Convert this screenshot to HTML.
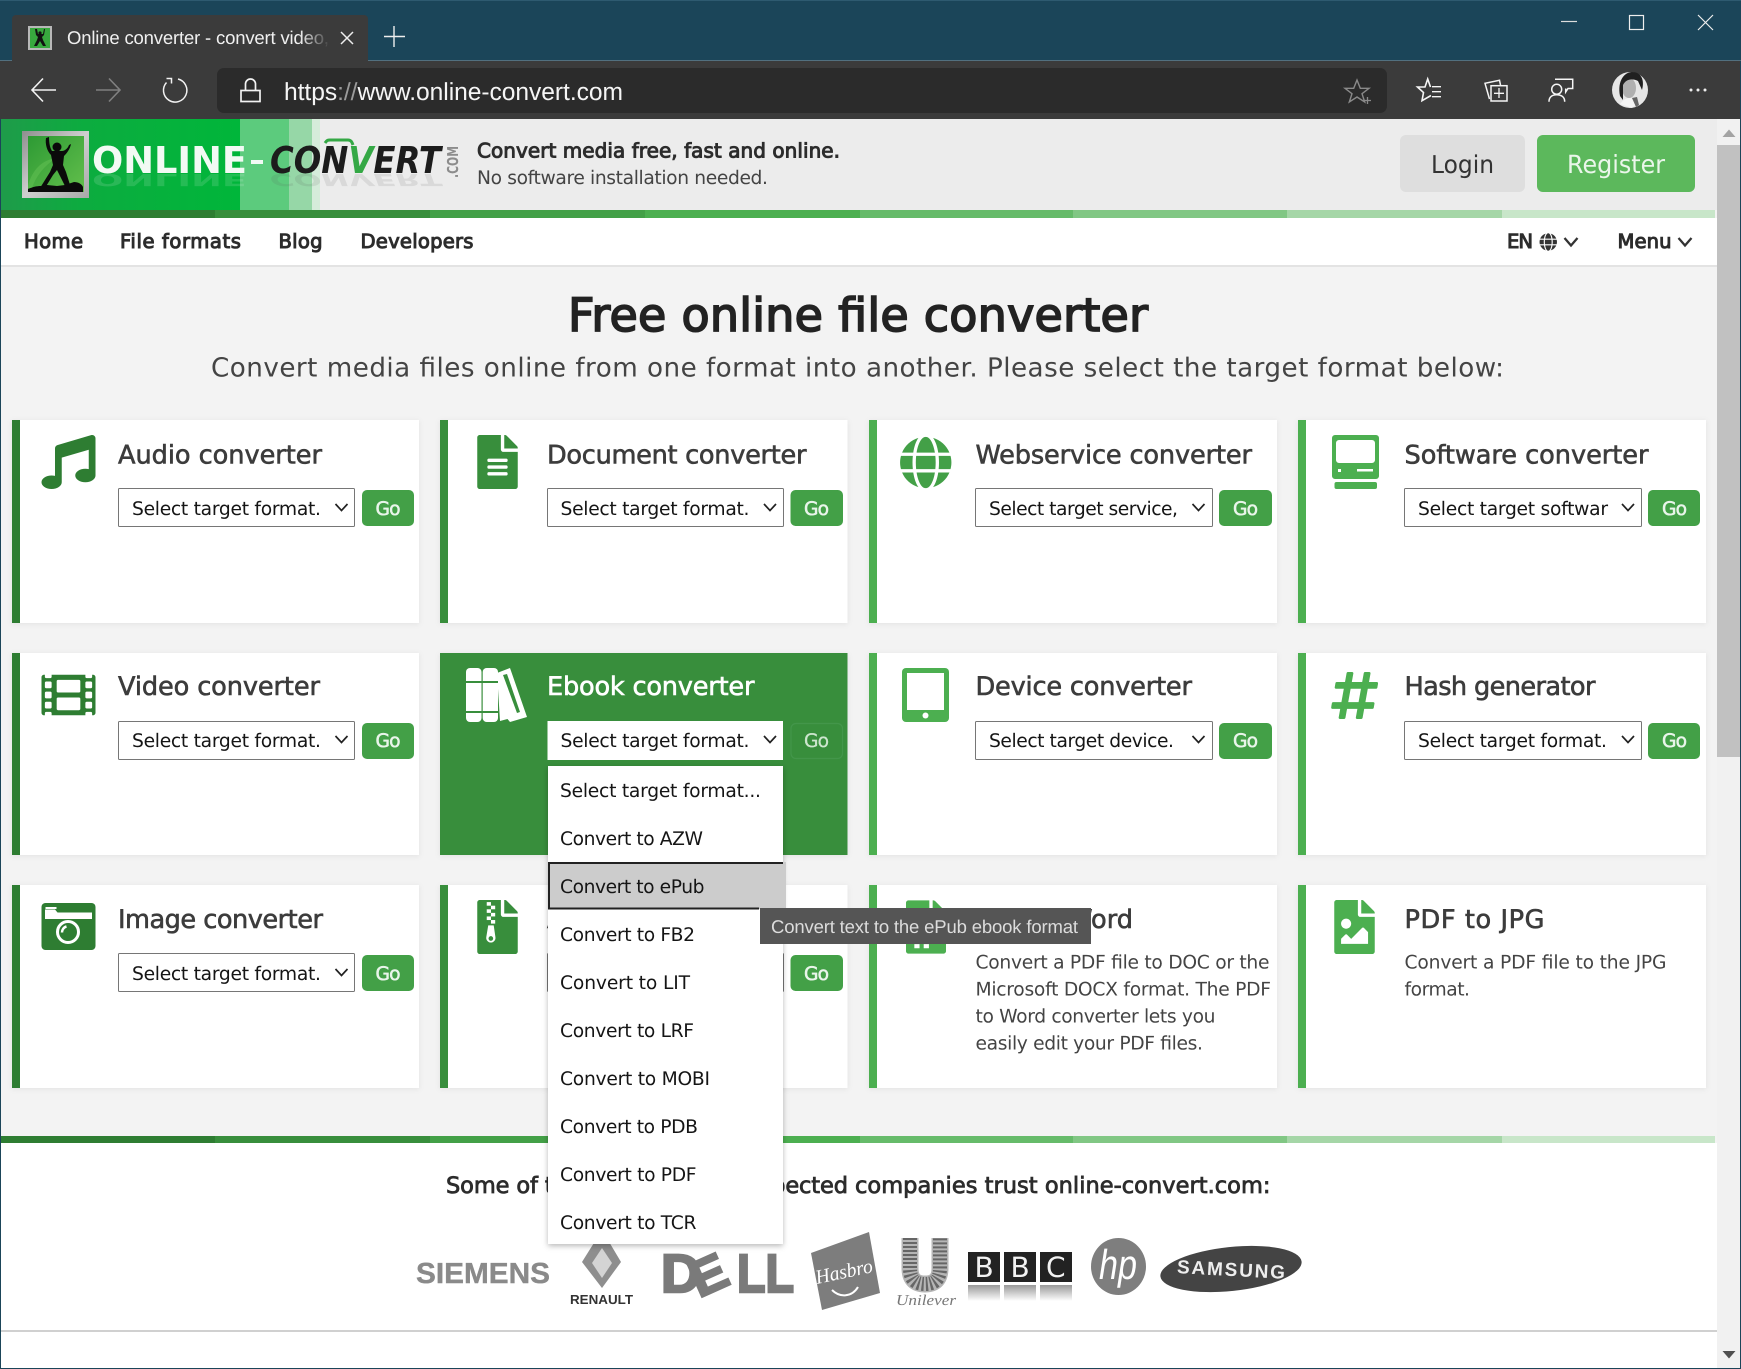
<!DOCTYPE html>
<html lang="en"><head><meta charset="utf-8"><title>Online converter - convert video, images, audio and documents</title>
<style>
html,body{margin:0;padding:0;width:1741px;height:1369px;overflow:hidden;background:#f3f3f3}
svg{display:block;position:absolute;left:0;top:0}
text{font-family:"DejaVu Sans","Liberation Sans",sans-serif;text-rendering:geometricPrecision}
.ch{font-family:"Liberation Sans",sans-serif}
.ttl{font-size:25.6px;fill:#3c3c3c;stroke:#3c3c3c;stroke-width:.6px}
.sel{font-size:18.7px;fill:#151515}
.go{font-size:18.7px;fill:#e9f5ea;stroke:#e9f5ea;stroke-width:.55px}
.opt{font-size:18.7px;fill:#151515}
.nav{font-size:19.6px;fill:#2c2c2c;stroke:#2c2c2c;stroke-width:1px}
.dsc{font-size:18.7px;fill:#444}
.c{fill:#fff}
.sb{fill:#fff;stroke:#767676;stroke-width:1}
</style></head><body>
<svg width="1741" height="1369" viewBox="0 0 1741 1369" xmlns="http://www.w3.org/2000/svg">
<defs>
<linearGradient id="hg" x1="0" x2="1" y1="0" y2="0"><stop offset="0" stop-color="#1f9b4a"/><stop offset=".35" stop-color="#0cac3f"/><stop offset="1" stop-color="#00b63a"/></linearGradient>
<linearGradient id="lg" x1="0" x2="1" y1="0" y2="1"><stop offset="0" stop-color="#8e8e8e"/><stop offset=".5" stop-color="#cfcfcf"/><stop offset="1" stop-color="#a8a8a8"/></linearGradient>
<linearGradient id="ig" x1="0" x2="1" y1="0" y2="1"><stop offset="0" stop-color="#2d9a34"/><stop offset="1" stop-color="#63bf4c"/></linearGradient>
<linearGradient id="fade" x1="0" x2="1" y1="0" y2="0"><stop offset="0" stop-color="#3b3b3b" stop-opacity="0"/><stop offset="1" stop-color="#3b3b3b"/></linearGradient>
<linearGradient id="bbcf" x1="0" x2="0" y1="0" y2="1"><stop offset="0" stop-color="#999"/><stop offset="1" stop-color="#fff"/></linearGradient>
<filter id="sh" x="-5%" y="-5%" width="110%" height="110%"><feDropShadow dx="0" dy="1" stdDeviation="3" flood-color="#000" flood-opacity=".07"/></filter>
<filter id="dd" x="-10%" y="-5%" width="120%" height="110%"><feDropShadow dx="0" dy="2" stdDeviation="3" flood-color="#000" flood-opacity=".28"/></filter>
<path id="fileAlt" d="M224 136V0H24C10.7 0 0 10.7 0 24v464c0 13.3 10.7 24 24 24h336c13.3 0 24-10.7 24-24V160H248c-13.2 0-24-10.8-24-24zm64 236c0 6.6-5.4 12-12 12H108c-6.6 0-12-5.4-12-12v-8c0-6.6 5.4-12 12-12h168c6.6 0 12 5.4 12 12v8zm0-64c0 6.6-5.4 12-12 12H108c-6.6 0-12-5.4-12-12v-8c0-6.6 5.4-12 12-12h168c6.6 0 12 5.4 12 12v8zm0-72v8c0 6.6-5.4 12-12 12H108c-6.6 0-12-5.4-12-12v-8c0-6.6 5.4-12 12-12h168c6.6 0 12 5.4 12 12zm96-114.1v6.1H256V0h6.1c6.4 0 12.5 2.5 17 7l97.9 98c4.5 4.5 7 10.6 7 16.9z"/>
</defs>

<!-- page background -->
<rect width="1741" height="1369" fill="#f3f3f3"/>

<!-- browser title bar -->
<rect width="1741" height="61" fill="#1b4559"/>
<rect width="1741" height="1" fill="#2e5a70"/>
<path d="M12 61V19a4 4 0 0 1 4-4h348a4 4 0 0 1 4 4v42z" fill="#3b3b3b"/>
<rect y="60" width="12" height="1" fill="#52707f"/><rect x="368" y="60" width="1373" height="1" fill="#52707f"/>
<rect x="28" y="26" width="24" height="24" fill="#b8b8b8"/><rect x="30" y="28" width="20" height="20" fill="#38a83e"/>
<path d="M35 29l1 6 2 2-1 3-3 6h3l3-5 3 5h3l-3-6-1-3 2-2 1-6-1 0-1 5h-5l-1-5z" fill="#111"/><circle cx="40" cy="33" r="1.600" fill="#111"/>
<text class="ch" x="67" y="44" font-size="18.5" fill="#f0f0f0" textLength="262">Online converter - convert video,</text>
<rect x="300" y="20" width="30" height="30" fill="url(#fade)"/>
<path d="M341 32l12 12M353 32l-12 12" stroke="#eee" stroke-width="1.5" fill="none"/>
<path d="M394 26v21M384 36.500h21" stroke="#eee" stroke-width="1.4" fill="none"/>
<path d="M1561 21.500h16" stroke="#ddd" stroke-width="1.200"/>
<rect x="1629.500" y="15.500" width="14" height="14" fill="none" stroke="#eee" stroke-width="1.200"/>
<path d="M1698 15l15 15M1713 15l-15 15" stroke="#eee" stroke-width="1.200" fill="none"/>

<!-- browser toolbar -->
<rect y="61" width="1741" height="58" fill="#3b3b3b"/>
<rect x="217" y="68" width="1170" height="45" rx="7" fill="#2b2b2b"/>
<path d="M32 90h24M43 78.500 32 90l11 11.500" stroke="#f2f2f2" stroke-width="1.600" fill="none"/>
<path d="M96 90h24M109 78.500 120 90l-11 11.500" stroke="#808080" stroke-width="1.600" fill="none"/>
<path d="M178 79A11.700 11.700 0 1 1 166.500 82.500M166.500 78.500H171.500V83.500" stroke="#f2f2f2" stroke-width="1.500" fill="none"/>
<rect x="241" y="90.500" width="19" height="11" fill="none" stroke="#f2f2f2" stroke-width="1.700"/>
<path d="M245.500 90.500v-6.500a5 5 0 0 1 10 0v6.500" fill="none" stroke="#f2f2f2" stroke-width="1.700"/>
<text class="ch" x="284" y="100" font-size="24.600" fill="#f5f5f5" textLength="339">https<tspan fill="#9a9a9a">://</tspan>www.online-convert.com</text>
<path d="M1357 80l3.300 8.300h8.700l-7 5.400 2.700 8.300-7.700-5-7.700 5 2.700-8.300-7-5.400h8.700z" fill="none" stroke="#8a8a8a" stroke-width="1.400"/>
<path d="M1364 100.500h7M1367.500 97v7" stroke="#8a8a8a" stroke-width="1.300"/>
<path d="M1430.500 87L1427.700 79L1425 87H1417.500L1423.500 92.500L1422 100.700L1431 95.500" fill="none" stroke="#f5f5f5" stroke-width="1.600"/>
<path d="M1432 86.700h9M1432 91.700h9M1432 96.700h9" stroke="#f5f5f5" stroke-width="1.400"/>
<rect x="1491" y="85.700" width="16" height="15.300" fill="none" stroke="#f5f5f5" stroke-width="1.500"/>
<path d="M1489.500 99L1485 83.300L1499.500 80.300L1500.500 85" fill="none" stroke="#f5f5f5" stroke-width="1.500"/>
<path d="M1499 88v10M1494 93.300h10" stroke="#f5f5f5" stroke-width="1.300"/>
<path d="M1555 79.300H1572.700V88.500H1568L1565.700 92L1565.700 88.500" fill="none" stroke="#f5f5f5" stroke-width="1.500"/>
<circle cx="1556.700" cy="89.300" r="5" fill="none" stroke="#f5f5f5" stroke-width="1.500"/>
<path d="M1549 101.700c0-5 3.500-7 7.700-7s8 2 8 7" fill="none" stroke="#f5f5f5" stroke-width="1.500"/>
<circle cx="1630" cy="90" r="18" fill="#e6e6e6"/>
<ellipse cx="1629" cy="88" rx="7" ry="10" fill="#b0b0b0"/>
<path d="M1620 96C1617 80 1625 72 1632 72C1641 72 1645 80 1642 90L1638 81C1632 78 1626 79 1623 85L1623 100Z" fill="#202020"/>
<path d="M1620 104c3-4 6-6 10-6s6 2 8 5l-6 5z" fill="#f5f5f5"/>
<path d="M1632 98l5-1 2 8-3 2z" fill="#666"/>
<circle cx="1691" cy="90" r="1.500" fill="#eee"/><circle cx="1698" cy="90" r="1.500" fill="#eee"/><circle cx="1705" cy="90" r="1.500" fill="#eee"/>

<!-- site header -->
<rect y="119" width="1717" height="91" fill="#ececec"/>
<rect y="119" width="240" height="91" fill="url(#hg)"/>
<rect x="240" y="119" width="49" height="91" fill="#5ccb7d"/>
<rect x="289" y="119" width="23" height="91" fill="#96d7a7"/>
<rect x="312" y="119" width="8" height="91" fill="#d5ecda"/>
<!-- logo -->
<rect x="22" y="131" width="67" height="67" fill="url(#lg)"/>
<rect x="28" y="136" width="56" height="56" fill="url(#ig)"/>
<path d="M28 186c4-16 14-26 28-28-12 8-20 18-24 30h-4z" fill="#5fbe51" opacity=".6"/>
<path d="M46 138C45 144 47 151 51 155L53 165L50 172L40 188L45 188L53 175L57 170L60 176L66 188L71 188L66 172L63 165L64 156C67 153 70 149 71 144L69 145C68 148 65 151 62 151L52 151C50 148 49 143 49 137Z" fill="#0a0a0a"/>
<circle cx="57" cy="147" r="4.500" fill="#0a0a0a"/>
<path d="M28 192v-3c5-2 8-3 13-3l6-1 10 1 8-1 9-3c4 0 8 2 9 5v5z" fill="#0a0a0a"/>
<text x="92" y="173" font-size="37" font-weight="700" fill="#f2faf4" textLength="155" lengthAdjust="spacingAndGlyphs">ONLINE</text>
<text transform="translate(0,252) scale(1,-.45)" x="92" y="173" font-size="37" font-weight="700" fill="#fff" opacity=".13" textLength="155" lengthAdjust="spacingAndGlyphs">ONLINE</text>
<rect x="251" y="160" width="12" height="4" fill="#f2faf4"/>
<text x="270" y="173" font-size="37" font-weight="700" font-style="italic" fill="#1c1c1c" textLength="171" lengthAdjust="spacingAndGlyphs">CON<tspan fill="#34a845">V</tspan>ERT</text>
<text transform="translate(0,252) scale(1,-.45)" x="270" y="173" font-size="37" font-weight="700" font-style="italic" fill="#555" opacity=".12" textLength="171" lengthAdjust="spacingAndGlyphs">CONVERT</text>
<path d="M325 143c2-3 3-3 5-3h18c3 0 4 2 5 5" fill="none" stroke="#34a845" stroke-width="3"/>
<text transform="translate(458,178) rotate(-90)" font-size="15" font-weight="700" fill="#8c8c8c" textLength="32" lengthAdjust="spacingAndGlyphs">.COM</text>

<text x="477" y="157.500" font-size="20" fill="#2c2c2c" stroke="#2c2c2c" stroke-width=".95" textLength="363">Convert media free, fast and online.</text>
<text x="477" y="184" font-size="18.700" fill="#444" textLength="291">No software installation needed.</text>
<rect x="1400" y="135" width="125" height="57" rx="6" fill="#dedede"/>
<text x="1431" y="173" font-size="24.500" fill="#333" textLength="63" lengthAdjust="spacingAndGlyphs">Login</text>
<rect x="1537" y="135" width="158" height="57" rx="6" fill="#5cb85c"/>
<text x="1567" y="173" font-size="25" fill="#eaf6ea" textLength="98" lengthAdjust="spacingAndGlyphs">Register</text>

<!-- stripes -->
<g>
<rect x="0" y="210" width="215" height="8" fill="#2e7d32"/><rect x="215" y="210" width="215" height="8" fill="#388e3c"/><rect x="430" y="210" width="215" height="8" fill="#43a047"/><rect x="645" y="210" width="215" height="8" fill="#4caf50"/><rect x="860" y="210" width="213" height="8" fill="#66bb6a"/><rect x="1073" y="210" width="214" height="8" fill="#81c784"/><rect x="1287" y="210" width="215" height="8" fill="#a5d6a7"/><rect x="1502" y="210" width="213" height="8" fill="#c8e6c9"/>
</g>

<!-- nav -->
<rect y="218" width="1717" height="47" fill="#fff"/>
<rect y="265" width="1717" height="2" fill="#e3e3e3"/>
<text class="nav" x="24" y="248" textLength="59">Home</text>
<text class="nav" x="120" y="248" textLength="121">File formats</text>
<text class="nav" x="278.500" y="248" textLength="44">Blog</text>
<text class="nav" x="360.500" y="248" textLength="113">Developers</text>
<text class="nav" x="1507" y="248" textLength="26">EN</text>
<svg x="1539.500" y="233" width="17.500" height="18" viewBox="0 0 496 512" fill="#333"><path d="M336.500 160C322 70.700 287.800 8 248 8s-74 62.700-88.500 152h177zM152 256c0 22.200 1.200 43.500 3.300 64h185.300c2.100-20.500 3.300-41.800 3.300-64s-1.200-43.500-3.300-64H155.300c-2.100 20.500-3.300 41.800-3.300 64zm324.700-96c-28.600-67.900-86.500-120.400-158-141.600 24.400 33.800 41.200 84.700 50 141.600h108zM177.200 18.400C105.800 39.600 47.800 92.100 19.300 160h108c8.700-56.900 25.500-107.800 49.900-141.600zM487.400 192H372.700c2.100 21 3.300 42.500 3.300 64s-1.200 43-3.300 64h114.600c5.500-20.500 8.600-41.800 8.600-64s-3.100-43.500-8.500-64zM120 256c0-21.500 1.200-43 3.300-64H8.600C3.200 212.500 0 233.800 0 256s3.200 43.500 8.600 64h114.600c-2-21-3.200-42.500-3.200-64zm39.500 96c14.500 89.300 48.700 152 88.500 152s74-62.700 88.500-152h-177zm159.300 141.600c71.400-21.200 129.400-73.700 158-141.600h-108c-8.800 56.900-25.600 107.800-50 141.600zM19.300 352c28.600 67.900 86.500 120.400 158 141.600-24.400-33.800-41.200-84.700-50-141.600h-108z"/></svg>
<path d="M1564.500 238l6.500 7.500 6.500-7.500" fill="none" stroke="#333" stroke-width="2.300"/>
<text class="nav" x="1617.500" y="248" textLength="54">Menu</text>
<path d="M1678.500 238l6.500 7.500 6.500-7.500" fill="none" stroke="#333" stroke-width="2.300"/>

<!-- heading -->
<text x="568" y="331" font-size="46" fill="#222" stroke="#222" stroke-width="1.700" textLength="580">Free online file converter</text>
<text x="211" y="376.500" font-size="26.200" fill="#444" textLength="1293">Convert media files online from one format into another. Please select the target format below:</text>

<!-- cards -->
<g filter="url(#sh)" fill="#fff">
<rect x="12" y="420" width="407" height="203"/><rect x="440" y="420" width="407.500" height="203"/><rect x="869" y="420" width="408" height="203"/><rect x="1298" y="420" width="408" height="203"/>
<rect x="12" y="653" width="407" height="202"/><rect x="440" y="653" width="407.500" height="202"/><rect x="869" y="653" width="408" height="202"/><rect x="1298" y="653" width="408" height="202"/>
<rect x="12" y="885" width="407" height="203"/><rect x="440" y="885" width="407.500" height="203"/><rect x="869" y="885" width="408" height="203"/><rect x="1298" y="885" width="408" height="203"/>
</g>
<g fill="#2e7d32"><rect x="12" y="420" width="8" height="203"/><rect x="12" y="653" width="8" height="202"/><rect x="12" y="885" width="8" height="203"/></g>
<g fill="#388e3c"><rect x="440" y="420" width="8" height="203"/><rect x="440" y="653" width="407.500" height="202"/><rect x="440" y="885" width="8" height="203"/></g>
<g fill="#4caf50"><rect x="869" y="420" width="8" height="203"/><rect x="869" y="653" width="8" height="202"/><rect x="869" y="885" width="8" height="203"/><rect x="1298" y="420" width="8" height="203"/><rect x="1298" y="653" width="8" height="202"/><rect x="1298" y="885" width="8" height="203"/></g>

<!-- icons -->
<svg x="41.500" y="435" width="54" height="54" viewBox="0 0 512 512" fill="#2e7d32"><path d="M511.990 32.010c0-21.710-21.100-37.010-41.600-30.510L150.400 96c-13.300 4.200-22.400 16.500-22.400 30.500v261.420c-10.050-2.380-20.720-3.920-32-3.920-53.020 0-96 28.650-96 64s42.980 64 96 64 96-28.650 96-64V214.310l256-75.020v184.630c-10.050-2.380-20.720-3.920-32-3.920-53.020 0-96 28.650-96 64s42.980 64 96 64 96-28.650 96-64l-.01-351.990z"/></svg>
<svg x="477" y="435" width="41" height="54" viewBox="0 0 384 512" fill="#388e3c"><use href="#fileAlt"/></svg>
<svg x="899" y="436" width="53.500" height="53" viewBox="0 0 496 512" fill="#43a047"><path d="M336.500 160C322 70.700 287.800 8 248 8s-74 62.700-88.500 152h177zM152 256c0 22.200 1.200 43.500 3.300 64h185.300c2.100-20.500 3.300-41.800 3.300-64s-1.200-43.500-3.300-64H155.300c-2.100 20.500-3.300 41.800-3.300 64zm324.700-96c-28.600-67.900-86.500-120.400-158-141.600 24.400 33.800 41.200 84.700 50 141.600h108zM177.200 18.400C105.800 39.600 47.800 92.100 19.300 160h108c8.700-56.900 25.500-107.800 49.900-141.600zM487.400 192H372.700c2.100 21 3.300 42.500 3.300 64s-1.200 43-3.300 64h114.600c5.500-20.500 8.600-41.800 8.600-64s-3.100-43.500-8.500-64zM120 256c0-21.500 1.200-43 3.300-64H8.600C3.200 212.500 0 233.800 0 256s3.200 43.500 8.600 64h114.600c-2-21-3.200-42.500-3.200-64zm39.500 96c14.500 89.300 48.700 152 88.500 152s74-62.700 88.500-152h-177zm159.300 141.600c71.400-21.200 129.400-73.700 158-141.600h-108c-8.800 56.900-25.600 107.800-50 141.600zM19.300 352c28.600 67.900 86.500 120.400 158 141.600-24.400-33.800-41.200-84.700-50-141.600h-108z"/></svg>
<g><path fill="#4caf50" fill-rule="evenodd" d="M1335 435h41a3 3 0 0 1 3 3v38a3 3 0 0 1-3 3h-41a3 3 0 0 1-3-3v-38a3 3 0 0 1 3-3zm4 5a3 3 0 0 0-3 3v17a3 3 0 0 0 3 3h33a3 3 0 0 0 3-3v-17a3 3 0 0 0-3-3z"/><rect x="1334.500" y="482" width="42.500" height="7" rx="2" fill="#4caf50"/><rect x="1338" y="469" width="3" height="3" fill="#fff"/><rect x="1357" y="469" width="16" height="2.500" fill="#fff"/></g>

<svg x="41.500" y="668" width="54" height="54" viewBox="0 0 512 512" fill="#2e7d32"><path d="M488 64h-8v20c0 6.600-5.400 12-12 12h-40c-6.600 0-12-5.400-12-12V64H96v20c0 6.600-5.400 12-12 12H44c-6.600 0-12-5.400-12-12V64h-8C10.700 64 0 74.700 0 88v336c0 13.300 10.700 24 24 24h8v-20c0-6.600 5.400-12 12-12h40c6.600 0 12 5.400 12 12v20h320v-20c0-6.600 5.400-12 12-12h40c6.600 0 12 5.400 12 12v20h8c13.300 0 24-10.700 24-24V88c0-13.300-10.700-24-24-24zM96 372c0 6.600-5.400 12-12 12H44c-6.600 0-12-5.400-12-12v-40c0-6.600 5.400-12 12-12h40c6.600 0 12 5.400 12 12v40zm0-96c0 6.600-5.400 12-12 12H44c-6.600 0-12-5.400-12-12v-40c0-6.600 5.400-12 12-12h40c6.600 0 12 5.400 12 12v40zm0-96c0 6.600-5.400 12-12 12H44c-6.600 0-12-5.400-12-12v-40c0-6.600 5.400-12 12-12h40c6.600 0 12 5.400 12 12v40zm272 208c0 6.600-5.400 12-12 12H156c-6.600 0-12-5.400-12-12v-96c0-6.600 5.400-12 12-12h200c6.600 0 12 5.400 12 12v96zm0-168c0 6.600-5.400 12-12 12H156c-6.600 0-12-5.400-12-12v-96c0-6.600 5.400-12 12-12h200c6.600 0 12 5.400 12 12v96zm112 152c0 6.600-5.400 12-12 12h-40c-6.600 0-12-5.400-12-12v-40c0-6.600 5.400-12 12-12h40c6.600 0 12 5.400 12 12v40zm0-96c0 6.600-5.400 12-12 12h-40c-6.600 0-12-5.400-12-12v-40c0-6.600 5.400-12 12-12h40c6.600 0 12 5.400 12 12v40zm0-96c0 6.600-5.400 12-12 12h-40c-6.600 0-12-5.400-12-12v-40c0-6.600 5.400-12 12-12h40c6.600 0 12 5.400 12 12v40z"/></svg>
<g fill="#fff"><rect x="466" y="668" width="15.500" height="54" rx="4"/><rect x="482.700" y="668" width="15.300" height="54" rx="4"/><path d="M497 673L510 668L527 717L510 722L507.500 719L500 721z" /></g>
<path d="M466 682h32M466 712h32" stroke="#388e3c" stroke-width="2"/><path d="M503 675L507 674L520 712L517 713z" fill="#388e3c"/>
<g><rect x="902" y="668" width="47" height="54" rx="4" fill="#4caf50"/><rect x="907" y="673" width="37" height="37" fill="#fff"/><circle cx="925.500" cy="715.500" r="3" fill="#fff"/></g>
<svg x="1331.100" y="668.600" width="47" height="53.700" viewBox="0 0 448 512" fill="#4caf50"><path d="M440.667 182.109l7.143-40c1.313-7.355-4.342-14.109-11.813-14.109h-74.810l14.623-81.891C377.123 38.754 371.468 32 363.997 32h-40.632a12 12 0 0 0-11.813 9.891L296.175 128H197.540l14.623-81.891C213.477 38.754 207.822 32 200.350 32h-40.632a12 12 0 0 0-11.813 9.891L132.528 128H53.432a12 12 0 0 0-11.813 9.891l-7.143 40C33.163 185.246 38.818 192 46.289 192h74.810L98.242 320H19.146a12 12 0 0 0-11.813 9.891l-7.143 40C-1.123 377.246 4.532 384 12.003 384h74.810L72.190 465.891C70.877 473.246 76.532 480 84.003 480h40.632a12 12 0 0 0 11.813-9.891L151.826 384h98.634l-14.623 81.891C234.523 473.246 240.178 480 247.650 480h40.632a12 12 0 0 0 11.813-9.891L315.472 384h79.096a12 12 0 0 0 11.813-9.891l7.143-40c1.313-7.355-4.342-14.109-11.813-14.109h-74.810l22.857-128h79.096a12 12 0 0 0 11.813-9.891zM261.889 320h-98.634l22.857-128h98.634l-22.857 128z"/></svg>

<g><rect x="41.500" y="903" width="54" height="47" rx="4" fill="#2e7d32"/><path d="M45 909.500h10l2.500 3H92v6.500H45z" fill="#fff"/><rect x="45.500" y="907" width="11" height="2" fill="#fff"/><circle cx="68" cy="932" r="10.500" fill="none" stroke="#fff" stroke-width="3"/><path d="M62 932.500a6 6 0 0 1 4.500-6" fill="none" stroke="#fff" stroke-width="2.500"/></g>
<svg x="477" y="900" width="41" height="54" viewBox="0 0 384 512" fill="#388e3c"><path d="M377 105L279.100 7c-4.500-4.500-10.600-7-17-7H256v128h128v-6.100c0-6.300-2.500-12.400-7-16.900zM224 136V0H24C10.700 0 0 10.700 0 24v464c0 13.300 10.700 24 24 24h336c13.300 0 24-10.700 24-24V160H248c-13.200 0-24-10.800-24-24z"/><g fill="#fff"><rect x="90" y="20" width="40" height="34"/><rect x="130" y="54" width="40" height="34"/><rect x="90" y="88" width="40" height="34"/><rect x="130" y="122" width="40" height="34"/><rect x="90" y="156" width="40" height="34"/><rect x="130" y="190" width="40" height="34"/><path d="M104 240h52l16 110a44 44 0 1 1-86 0z"/></g><circle cx="129" cy="365" r="22" fill="#388e3c"/></svg>
<svg x="906" y="900" width="40" height="54" viewBox="0 0 384 512" fill="#4caf50"><path d="M377 105L279.100 7c-4.500-4.500-10.600-7-17-7H256v128h128v-6.100c0-6.300-2.500-12.400-7-16.900zM224 136V0H24C10.700 0 0 10.700 0 24v464c0 13.300 10.700 24 24 24h336c13.300 0 24-10.700 24-24V160H248c-13.200 0-24-10.800-24-24z"/><path d="M80 420h50v40H80zM170 420h50v40h-50z" fill="#fff"/></svg>
<svg x="1334" y="900" width="41" height="54" viewBox="0 0 384 512" fill="#4caf50"><path d="M384 121.941V128H256V0h6.059a24 24 0 0 1 16.970 7.029l97.941 97.941a24.002 24.002 0 0 1 7.030 16.971zM248 160c-13.200 0-24-10.800-24-24V0H24C10.745 0 0 10.745 0 24v464c0 13.255 10.745 24 24 24h336c13.255 0 24-10.745 24-24V160H248zm-135.455 16c26.510 0 48 21.490 48 48s-21.490 48-48 48-48-21.490-48-48 21.491-48 48-48zm208 240h-256l.485-48.485L104.545 328c4.686-4.686 11.799-4.201 16.485.485L160.545 368 264.060 264.485c4.686-4.686 12.284-4.686 16.971 0L320.545 304v112z"/></svg>

<!-- titles -->
<text class="ttl" x="118" y="463.500" textLength="204">Audio converter</text>
<text class="ttl" x="547" y="463.500" textLength="259.500">Document converter</text>
<text class="ttl" x="975.500" y="463.500" textLength="276.500">Webservice converter</text>
<text class="ttl" x="1404.500" y="463.500" textLength="244">Software converter</text>
<text class="ttl" x="118" y="695" textLength="202">Video converter</text>
<text class="ttl" x="547" y="695" textLength="207.500" style="fill:#fff;stroke:#fff">Ebook converter</text>
<text class="ttl" x="975.500" y="695" textLength="216.500">Device converter</text>
<text class="ttl" x="1404.500" y="695" textLength="191">Hash generator</text>
<text class="ttl" x="118" y="928" textLength="205">Image converter</text>
<text class="ttl" x="547" y="928" textLength="240">Archive converter</text>
<text class="ttl" x="975.500" y="928" textLength="157.500">PDF to Word</text>
<text class="ttl" x="1404.500" y="928" textLength="140">PDF to JPG</text>

<!-- selects -->
<g>
<rect class="sb" x="118.500" y="488.500" width="236" height="38" rx="1"/><rect class="sb" x="547.500" y="488.500" width="236" height="38" rx="1"/><rect class="sb" x="975.500" y="488.500" width="237" height="38" rx="1"/><rect class="sb" x="1404.500" y="488.500" width="237" height="38" rx="1"/>
<rect class="sb" x="118.500" y="721.500" width="236" height="38" rx="1"/><rect x="547.500" y="721" width="235.500" height="39" fill="#fff"/><rect class="sb" x="975.500" y="721.500" width="237" height="38" rx="1"/><rect class="sb" x="1404.500" y="721.500" width="237" height="38" rx="1"/>
<rect class="sb" x="118.500" y="953.500" width="236" height="38" rx="1"/><rect class="sb" x="547.500" y="953.500" width="236" height="38" rx="1"/>
</g>
<g>
<text class="sel" x="132" y="515" textLength="189">Select target format.</text>
<text class="sel" x="560.500" y="515" textLength="189">Select target format.</text>
<text class="sel" x="989" y="515" textLength="189">Select target service,</text>
<text class="sel" x="1418" y="515" textLength="190">Select target softwar</text>
<text class="sel" x="132" y="747" textLength="189">Select target format.</text>
<text class="sel" x="560.500" y="747" textLength="189">Select target format.</text>
<text class="sel" x="989" y="747" textLength="185">Select target device.</text>
<text class="sel" x="1418" y="747" textLength="189">Select target format.</text>
<text class="sel" x="132" y="980" textLength="189">Select target format.</text>
</g>
<g fill="none" stroke="#222" stroke-width="1.700">
<path d="M335.500 504l6 6.500 6-6.500M764 504l6 6.500 6-6.500M1192.500 504l6 6.500 6-6.500M1622 504l6 6.500 6-6.500M335.500 736l6 6.500 6-6.500M764 736l6 6.500 6-6.500M1192.500 736l6 6.500 6-6.500M1622 736l6 6.500 6-6.500M335.500 969l6 6.500 6-6.500"/>
</g>
<!-- go buttons -->
<g fill="#43a047">
<rect x="362" y="490" width="52" height="36" rx="5"/><rect x="790.500" y="490" width="52.500" height="36" rx="5"/><rect x="1219" y="490" width="53" height="36" rx="5"/><rect x="1648" y="490" width="52" height="36" rx="5"/>
<rect x="362" y="723" width="52" height="36" rx="5"/><rect x="1219" y="723" width="53" height="36" rx="5"/><rect x="1648" y="723" width="52" height="36" rx="5"/>
<rect x="362" y="955" width="52" height="36" rx="5"/><rect x="790.500" y="955" width="52.500" height="36" rx="5"/>
</g>
<rect x="791" y="723.500" width="51.500" height="35" rx="5" fill="none" stroke="#43964a" stroke-width="1.200"/>
<g>
<text class="go" x="375.500" y="515" textLength="25">Go</text><text class="go" x="804" y="515" textLength="25">Go</text><text class="go" x="1233" y="515" textLength="25">Go</text><text class="go" x="1662" y="515" textLength="25">Go</text>
<text class="go" x="375.500" y="747" textLength="25">Go</text><text class="go" x="804" y="747" textLength="25" style="fill:#cde6ce;stroke:#cde6ce;stroke-width:.3">Go</text><text class="go" x="1233" y="747" textLength="25">Go</text><text class="go" x="1662" y="747" textLength="25">Go</text>
<text class="go" x="375.500" y="980" textLength="25">Go</text><text class="go" x="804" y="980" textLength="25">Go</text>
</g>

<!-- description text -->
<text class="dsc" x="975.500" y="968.500" textLength="294">Convert a PDF file to DOC or the</text>
<text class="dsc" x="975.500" y="995.500" textLength="295.500">Microsoft DOCX format. The PDF</text>
<text class="dsc" x="975.500" y="1022.500" textLength="240">to Word converter lets you</text>
<text class="dsc" x="975.500" y="1049.500" textLength="227.500">easily edit your PDF files.</text>
<text class="dsc" x="1404.500" y="968.500" textLength="262">Convert a PDF file to the JPG</text>
<text class="dsc" x="1404.500" y="995.500" textLength="65.500">format.</text>

<!-- footer band -->
<rect y="1143" width="1717" height="225" fill="#fff"/>
<rect x="0" y="1136" width="215" height="7" fill="#2e7d32"/><rect x="215" y="1136" width="215" height="7" fill="#388e3c"/><rect x="430" y="1136" width="215" height="7" fill="#43a047"/><rect x="645" y="1136" width="215" height="7" fill="#4caf50"/><rect x="860" y="1136" width="213" height="7" fill="#66bb6a"/><rect x="1073" y="1136" width="214" height="7" fill="#81c784"/><rect x="1287" y="1136" width="215" height="7" fill="#a5d6a7"/><rect x="1502" y="1136" width="213" height="7" fill="#c8e6c9"/>
<text x="446" y="1193" font-size="22.500" fill="#2c2c2c" stroke="#2c2c2c" stroke-width=".8" textLength="402">Some of the world's most respected</text>
<text x="855" y="1193" font-size="22.500" fill="#2c2c2c" stroke="#2c2c2c" stroke-width=".8" textLength="415.500">companies trust online-convert.com:</text>
<rect y="1330" width="1717" height="2" fill="#d0d0d0"/>

<!-- logos -->
<text x="416" y="1283" font-size="29" font-weight="700" fill="#8a8a8a" stroke="#8a8a8a" stroke-width=".4" textLength="134" lengthAdjust="spacingAndGlyphs" style="font-family:'Liberation Sans',sans-serif">SIEMENS</text>
<path d="M602 1230L621 1262L602 1288L582 1262z" fill="#8e8e8e"/><path d="M602 1248L612 1263L602 1278L592 1263z" fill="#d4d4d4"/>
<text x="570" y="1304" font-size="13" font-weight="700" fill="#333" textLength="63" lengthAdjust="spacingAndGlyphs" style="font-family:'Liberation Sans',sans-serif">RENAULT</text>
<text x="661" y="1292" font-size="54" font-weight="700" fill="#7a7a7a" stroke="#7a7a7a" stroke-width="2.500" textLength="40" lengthAdjust="spacingAndGlyphs" style="font-family:'Liberation Sans',sans-serif">D</text>
<text transform="translate(699,1298) rotate(-24)" font-size="50" font-weight="700" fill="#7a7a7a" stroke="#7a7a7a" stroke-width="2.500" textLength="36" lengthAdjust="spacingAndGlyphs" style="font-family:'Liberation Sans',sans-serif">E</text>
<text x="737" y="1292" font-size="54" font-weight="700" fill="#7a7a7a" stroke="#7a7a7a" stroke-width="2.500" textLength="57" lengthAdjust="spacingAndGlyphs" style="font-family:'Liberation Sans',sans-serif">LL</text>
<path d="M811 1253l58-21 11 61-58 17z" fill="#7d7d7d"/>
<text transform="translate(817,1284) rotate(-12)" font-size="20" font-style="italic" fill="#fff" textLength="58" lengthAdjust="spacingAndGlyphs" style="font-family:'Liberation Serif',serif">Hasbro</text>
<path d="M832 1290c8 8 20 7 26-3" fill="none" stroke="#fff" stroke-width="2"/>
<path d="M910 1238v30c0 12 6 16 15 16s15-4 15-16v-30" fill="none" stroke="#b5b5b5" stroke-width="17"/>
<path d="M910 1238v30c0 12 6 16 15 16s15-4 15-16v-30" fill="none" stroke="#666" stroke-width="14" stroke-dasharray="2 2"/>
<text x="896" y="1305" font-size="15" font-style="italic" fill="#777" textLength="60" lengthAdjust="spacingAndGlyphs" style="font-family:'Liberation Serif',serif">Unilever</text>
<g fill="#222"><rect x="968" y="1252" width="32" height="30"/><rect x="1004" y="1252" width="32" height="30"/><rect x="1040" y="1252" width="32" height="30"/></g>
<g fill="url(#bbcf)"><rect x="968" y="1285" width="32" height="16"/><rect x="1004" y="1285" width="32" height="16"/><rect x="1040" y="1285" width="32" height="16"/></g>
<g font-size="28" fill="#f2f2f2" style="font-family:'Liberation Sans',sans-serif"><text x="974.500" y="1277">B</text><text x="1010.500" y="1277">B</text><text x="1046" y="1277">C</text></g>
<ellipse cx="1118.500" cy="1266.500" rx="27.500" ry="28.500" fill="#7e7e7e"/>
<text x="1099" y="1279" font-size="42" font-style="italic" fill="#fff" textLength="38" lengthAdjust="spacingAndGlyphs" style="font-family:'Liberation Sans',sans-serif">hp</text>
<ellipse cx="1231" cy="1269" rx="71" ry="22" fill="#444" transform="rotate(-6 1231 1269)"/>
<text x="1177" y="1276" font-size="19" font-weight="700" fill="#eee" textLength="108" transform="rotate(3 1231 1270)" style="font-family:'Liberation Sans',sans-serif">SAMSUNG</text>

<!-- dropdown -->
<rect x="548" y="766" width="235" height="478" fill="#fff" filter="url(#dd)"/>
<rect x="548" y="862" width="238" height="47" fill="#ccc"/>
<path d="M549 909V863H783" fill="none" stroke="#222" stroke-width="2"/>
<path d="M548 908.500H759" stroke="#222" stroke-width="2"/>
<text class="opt" x="560" y="797" textLength="201">Select target format...</text>
<text class="opt" x="560" y="845" textLength="143">Convert to AZW</text>
<text class="opt" x="560" y="893" textLength="144.500">Convert to ePub</text>
<text class="opt" x="560" y="941" textLength="135">Convert to FB2</text>
<text class="opt" x="560" y="989" textLength="130">Convert to LIT</text>
<text class="opt" x="560" y="1037" textLength="134">Convert to LRF</text>
<text class="opt" x="560" y="1085" textLength="150">Convert to MOBI</text>
<text class="opt" x="560" y="1133" textLength="138">Convert to PDB</text>
<text class="opt" x="560" y="1181" textLength="136.500">Convert to PDF</text>
<text class="opt" x="560" y="1229" textLength="136.500">Convert to TCR</text>

<!-- tooltip -->
<rect x="760" y="908" width="331" height="36" fill="#555"/>
<text class="ch" x="771" y="933" font-size="18.500" fill="#dcdcdc" textLength="307">Convert text to the ePub ebook format</text>

<!-- scrollbar -->
<rect x="1717" y="119" width="24" height="1250" fill="#f1f1f1"/>
<rect x="1717" y="145" width="24" height="612" fill="#c1c1c1"/>
<path d="M1722.500 137l6.500-7.500 6.500 7.500z" fill="#a3a3a3"/>
<path d="M1722.500 1351l6.500 7.500 6.500-7.500z" fill="#505050"/>

<!-- window frame -->
<rect x="0" y="119" width="1" height="1250" fill="#1b4559"/>
<rect x="0" y="1368" width="1741" height="1" fill="#1b4559"/>
<rect x="1740" y="61" width="1" height="1308" fill="#1b4559"/>
</svg>
</body></html>
